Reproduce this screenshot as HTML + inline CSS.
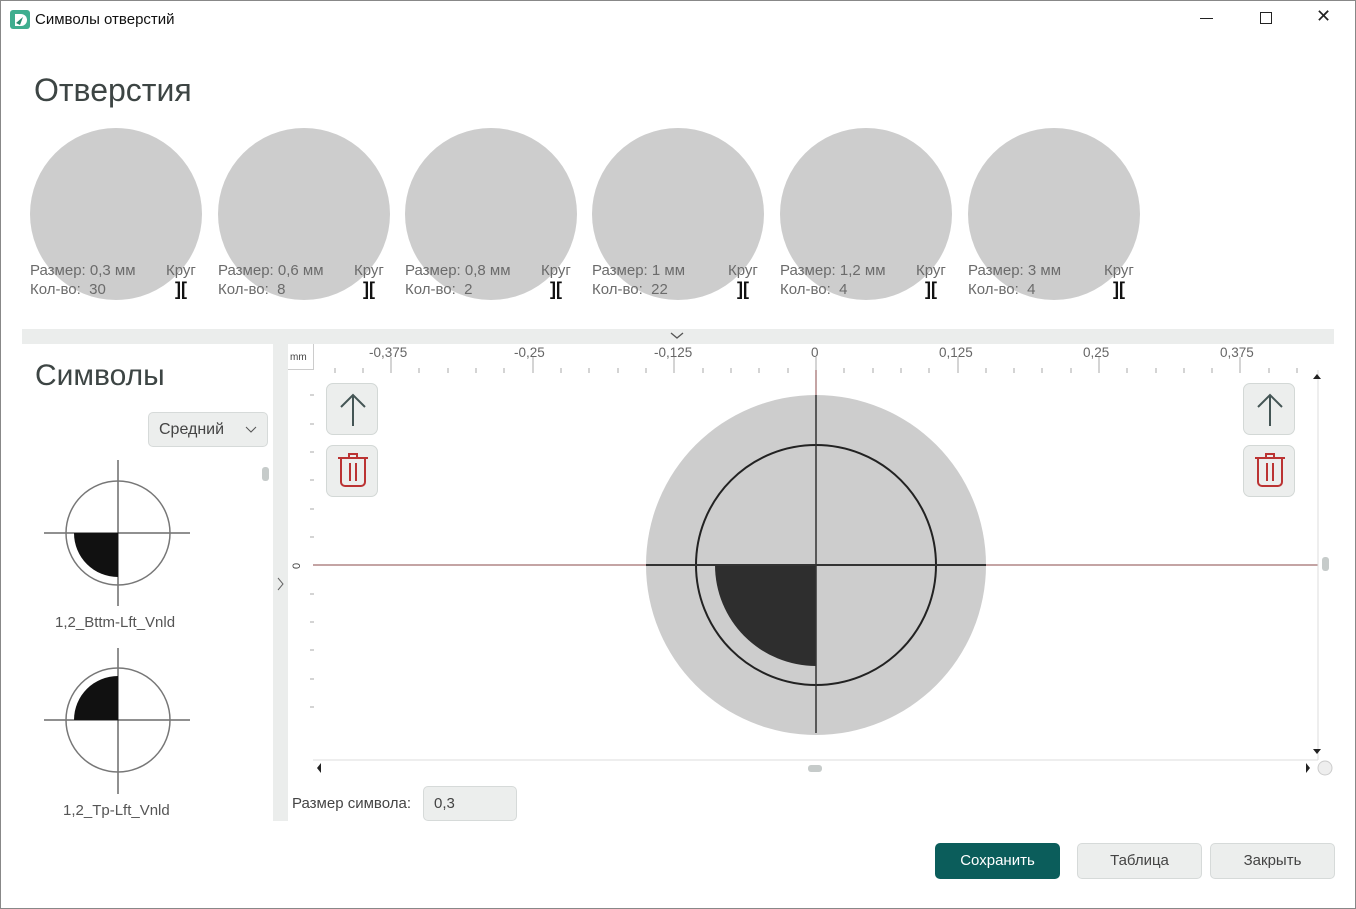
<!DOCTYPE html>
<html><head><meta charset="utf-8"><style>
*{margin:0;padding:0;box-sizing:border-box}
body{width:1356px;height:909px;background:#fff;font-family:"Liberation Sans",sans-serif;position:relative;overflow:hidden;outline:1px solid #888;outline-offset:-1px}
.a{position:absolute}
.card{position:absolute;top:128px;width:174px;height:174px}
.card .c{position:absolute;left:0;top:0;width:172px;height:172px;border-radius:50%;background:#cdcdcd}
.card .t{position:absolute;font-size:15px;color:#6b6b6b;white-space:nowrap}
.btn{position:absolute;border-radius:5px;background:#eceeed;border:1px solid #d6dad9;font-size:15px;color:#444;text-align:center;line-height:34px}
.ib{position:absolute;width:52px;height:52px;border-radius:7px;background:#eceeed;border:1px solid #d3d8d6}
.lbl{position:absolute;font-size:13.5px;color:#666;top:345px}
</style></head><body>
<svg class="a" style="left:10px;top:10px" width="20" height="20"><rect x="0" y="0" width="20" height="19" rx="3" fill="#3fae8f"/><path d="M5 4h6a6 6 0 0 1 0 12H5z" fill="#fff"/><path d="M6 13l7-6-3 8z" fill="#2a8a6e"/></svg>
<div class="a" style="left:35px;top:11px;font-size:15px;color:#111">Символы отверстий</div>
<div class="a" style="left:1200px;top:18px;width:13px;height:1px;background:#222"></div>
<div class="a" style="left:1260px;top:12px;width:12px;height:12px;border:1px solid #222"></div>
<div class="a" style="left:1316px;top:6px;font-size:18px;color:#222">✕</div>
<div class="a" style="left:34px;top:72px;font-size:32px;color:#3d4544">Отверстия</div>

<div class="card" style="left:30px"><div class="c"></div><div class="t" style="left:0;top:134px">Размер: 0,3 мм</div><div class="t" style="left:136px;top:134px">Круг</div><div class="t" style="left:0;top:153px">Кол-во:&nbsp; 30</div><div class="t" style="left:145px;top:151px;font-weight:bold;color:#111;font-size:18px">][</div></div>
<div class="card" style="left:218px"><div class="c"></div><div class="t" style="left:0;top:134px">Размер: 0,6 мм</div><div class="t" style="left:136px;top:134px">Круг</div><div class="t" style="left:0;top:153px">Кол-во:&nbsp; 8</div><div class="t" style="left:145px;top:151px;font-weight:bold;color:#111;font-size:18px">][</div></div>
<div class="card" style="left:405px"><div class="c"></div><div class="t" style="left:0;top:134px">Размер: 0,8 мм</div><div class="t" style="left:136px;top:134px">Круг</div><div class="t" style="left:0;top:153px">Кол-во:&nbsp; 2</div><div class="t" style="left:145px;top:151px;font-weight:bold;color:#111;font-size:18px">][</div></div>
<div class="card" style="left:592px"><div class="c"></div><div class="t" style="left:0;top:134px">Размер: 1 мм</div><div class="t" style="left:136px;top:134px">Круг</div><div class="t" style="left:0;top:153px">Кол-во:&nbsp; 22</div><div class="t" style="left:145px;top:151px;font-weight:bold;color:#111;font-size:18px">][</div></div>
<div class="card" style="left:780px"><div class="c"></div><div class="t" style="left:0;top:134px">Размер: 1,2 мм</div><div class="t" style="left:136px;top:134px">Круг</div><div class="t" style="left:0;top:153px">Кол-во:&nbsp; 4</div><div class="t" style="left:145px;top:151px;font-weight:bold;color:#111;font-size:18px">][</div></div>
<div class="card" style="left:968px"><div class="c"></div><div class="t" style="left:0;top:134px">Размер: 3 мм</div><div class="t" style="left:136px;top:134px">Круг</div><div class="t" style="left:0;top:153px">Кол-во:&nbsp; 4</div><div class="t" style="left:145px;top:151px;font-weight:bold;color:#111;font-size:18px">][</div></div>

<div class="a" style="left:22px;top:329px;width:1312px;height:15px;background:#ebedec"></div>
<svg class="a" style="left:670px;top:331px" width="14" height="10"><path d="M1 2l6 5 6-5" stroke="#555" fill="none" stroke-width="1.3"/></svg>
<div class="a" style="left:273px;top:344px;width:15px;height:477px;background:#ebedec"></div>
<svg class="a" style="left:276px;top:577px" width="10" height="14"><path d="M2 1l5 6-5 6" stroke="#666" fill="none"/></svg>
<div class="a" style="left:35px;top:359px;font-size:30px;color:#3d4544">Символы</div>
<div class="btn" style="left:148px;top:412px;width:120px;height:35px;text-align:left;padding-left:10px;line-height:33px;font-size:16px">Средний<svg class="a" style="left:96px;top:13px" width="12" height="8"><path d="M1 1l5 5 5-5" stroke="#555" fill="none"/></svg></div>
<div class="a" style="left:262px;top:467px;width:7px;height:14px;border-radius:3px;background:#c6cbca"></div>

<svg class="a" style="left:40px;top:458px" width="160" height="360">
<line x1="78" y1="2" x2="78" y2="148" stroke="#222"/><line x1="4" y1="75" x2="150" y2="75" stroke="#222"/>
<circle cx="78" cy="75" r="52" stroke="#777" stroke-width="1.5" fill="none"/>
<path d="M78 75H34A44 44 0 0 0 78 119z" fill="#111"/>
<line x1="78" y1="190" x2="78" y2="336" stroke="#222"/><line x1="4" y1="262" x2="150" y2="262" stroke="#222"/>
<circle cx="78" cy="262" r="52" stroke="#777" stroke-width="1.5" fill="none"/>
<path d="M78 262H34A44 44 0 0 1 78 218z" fill="#111"/>
</svg>
<div class="a" style="left:55px;top:614px;font-size:15px;color:#555">1,2_Bttm-Lft_Vnld</div>
<div class="a" style="left:63px;top:802px;font-size:15px;color:#555">1,2_Tp-Lft_Vnld</div>

<div class="a" style="left:288px;top:344px;width:26px;height:26px;border-right:1px solid #ccc;border-bottom:1px solid #ccc;font-size:10px;color:#444;padding:8px 0 0 2px">mm</div>
<div class="lbl" style="left:369px">-0,375</div><div class="lbl" style="left:514px">-0,25</div><div class="lbl" style="left:654px">-0,125</div><div class="lbl" style="left:811px">0</div><div class="lbl" style="left:939px">0,125</div><div class="lbl" style="left:1083px">0,25</div><div class="lbl" style="left:1220px">0,375</div>
<svg class="a" style="left:288px;top:344px" width="1068" height="440">
<g stroke="#aaa">
<path d="M47 24v5M75 24v5M103 13v16M131 24v5M160 24v5M188 24v5M216 24v5M245 13v16M273 24v5M301 24v5M330 24v5M358 24v5M386 13v16M415 24v5M443 24v5M471 24v5M500 24v5M528 13v16M556 24v5M585 24v5M613 24v5M641 24v5M670 13v16M698 24v5M726 24v5M754 24v5M783 24v5M811 13v16M839 24v5M868 24v5M896 24v5M924 24v5M952 13v16M981 24v5M1009 24v5"/>
<path d="M22 51h4M22 80h4M22 108h4M22 136h4M22 165h4M22 193h4M22 250h4M22 278h4M22 306h4M22 335h4M22 363h4"/>
</g>
<text x="12" y="225" font-size="11" fill="#444" transform="rotate(-90 12 225)" font-family="Liberation Sans">0</text>
<circle cx="528" cy="221" r="170" fill="#cdcdcd"/>
<path d="M528 221H427A101 101 0 0 0 528 322z" fill="#2e2e2e"/>
<circle cx="528" cy="221" r="120" stroke="#222" stroke-width="2" fill="none"/>
<line x1="25" y1="221" x2="1030" y2="221" stroke="#8a4a4a" stroke-width="1"/>
<line x1="358" y1="221" x2="698" y2="221" stroke="#333" stroke-width="2"/>
<line x1="528" y1="26" x2="528" y2="389" stroke="#8a4a4a"/>
<line x1="528" y1="51" x2="528" y2="389" stroke="#333" stroke-width="1.5"/>
<line x1="25" y1="416" x2="1030" y2="416" stroke="#ddd"/>
<line x1="1030" y1="26" x2="1030" y2="416" stroke="#ddd"/>
<path d="M33 419l-4 5 4 5zM1018 419l4 5-4 5zM1025 35l4-5 4 5zM1025 405l4 5 4-5z" fill="#222"/>
<rect x="520" y="421" width="14" height="7" rx="3" fill="#c6cbca"/>
<rect x="1034" y="213" width="7" height="14" rx="3" fill="#c6cbca"/>
<circle cx="1037" cy="424" r="7" fill="#eee" stroke="#ccc"/>
</svg>

<div class="ib" style="left:326px;top:383px"><svg width="52" height="52"><path d="M26 42V11M14 23l12-12 12 12" stroke="#455" stroke-width="2" fill="none"/></svg></div>
<div class="ib" style="left:326px;top:445px"><svg width="52" height="52"><path d="M11 12h30M22 12V8h8v4M14 12v24a4 4 0 0 0 4 4h16a4 4 0 0 0 4-4V12M23 17v18M29 17v18" stroke="#b33" stroke-width="2" fill="none"/></svg></div>
<div class="ib" style="left:1243px;top:383px"><svg width="52" height="52"><path d="M26 42V11M14 23l12-12 12 12" stroke="#455" stroke-width="2" fill="none"/></svg></div>
<div class="ib" style="left:1243px;top:445px"><svg width="52" height="52"><path d="M11 12h30M22 12V8h8v4M14 12v24a4 4 0 0 0 4 4h16a4 4 0 0 0 4-4V12M23 17v18M29 17v18" stroke="#b33" stroke-width="2" fill="none"/></svg></div>

<div class="a" style="left:292px;top:795px;font-size:15px;color:#444">Размер символа:</div>
<div class="btn" style="left:423px;top:786px;width:94px;height:35px;text-align:left;padding-left:10px;line-height:33px">0,3</div>

<div class="btn" style="left:935px;top:843px;width:125px;height:36px;background:#0b5d5b;border-color:#0b5d5b;color:#fff">Сохранить</div>
<div class="btn" style="left:1077px;top:843px;width:125px;height:36px">Таблица</div>
<div class="btn" style="left:1210px;top:843px;width:125px;height:36px">Закрыть</div>
</body></html>
